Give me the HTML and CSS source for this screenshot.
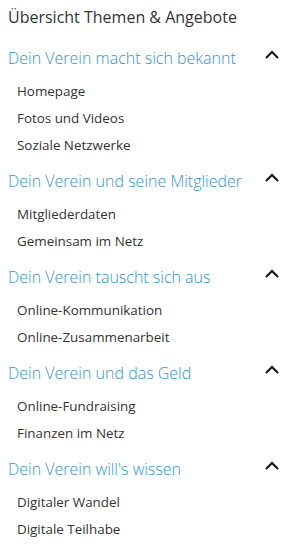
FILE: index.html
```html
<!DOCTYPE html>
<html lang="de">
  <head>
    <meta charset="UTF-8" />
    <meta name="viewport" content="width=device-width, initial-scale=1.0" />
    <title>Übersicht Themen &amp; Angebote</title>
    <link rel="stylesheet" href="styles.css">
  </head>
  <body>
    <div class="overview">
      <h1 class="overview-title">Übersicht Themen &amp; Angebote</h1>

      <!-- Themen -->
      <div class="topic">
        <div class="topic-head">
          <span class="topic-name">Dein Verein macht sich bekannt</span>
          <svg class="chevron" width="14" height="9" viewBox="0 0 14 9"><path d="M1 8 L7 2 L13 8" /></svg>
        </div>
        <ul class="topic-links">
          <li><a href="#">Homepage</a></li>
          <li><a href="#">Fotos und Videos</a></li>
          <li><a href="#">Soziale Netzwerke</a></li>
        </ul>
      </div>

      <div class="topic">
        <div class="topic-head">
          <span class="topic-name">Dein Verein und seine Mitglieder</span>
          <svg class="chevron" width="14" height="9" viewBox="0 0 14 9"><path d="M1 8 L7 2 L13 8" /></svg>
        </div>
        <ul class="topic-links">
          <li><a href="#">Mitgliederdaten</a></li>
          <li><a href="#">Gemeinsam im Netz</a></li>
        </ul>
      </div>

      <div class="topic">
        <div class="topic-head">
          <span class="topic-name">Dein Verein tauscht sich aus</span>
          <svg class="chevron" width="14" height="9" viewBox="0 0 14 9"><path d="M1 8 L7 2 L13 8" /></svg>
        </div>
        <ul class="topic-links">
          <li><a href="#">Online-Kommunikation</a></li>
          <li><a href="#">Online-Zusammenarbeit</a></li>
        </ul>
      </div>

      <div class="topic">
        <div class="topic-head">
          <span class="topic-name">Dein Verein und das Geld</span>
          <svg class="chevron" width="14" height="9" viewBox="0 0 14 9"><path d="M1 8 L7 2 L13 8" /></svg>
        </div>
        <ul class="topic-links">
          <li><a href="#">Online-Fundraising</a></li>
          <li><a href="#">Finanzen im Netz</a></li>
        </ul>
      </div>

      <div class="topic">
        <div class="topic-head">
          <span class="topic-name">Dein Verein will's wissen</span>
          <svg class="chevron" width="14" height="9" viewBox="0 0 14 9"><path d="M1 8 L7 2 L13 8" /></svg>
        </div>
        <ul class="topic-links">
          <li><a href="#">Digitaler Wandel</a></li>
          <li><a href="#">Digitale Teilhabe</a></li>
        </ul>
      </div>
    </div>
  </body>
</html>
```

FILE: styles.css
```css
/* General Styles */
body {
  font-family: "Open Sans", sans-serif;
  margin: 0;
  padding: 0;
  background: #fff;
  color: #333;
}

.overview {
  padding: 6px 17px 0 8px;
}

.overview-title {
  font-size: 16px;
  font-weight: normal;
  color: #333;
  margin: 0 0 18px 0;
  line-height: 22px;
}

.topic {
  margin-bottom: 11px;
}

.topic-head {
  display: flex;
  justify-content: space-between;
  align-items: center;
  height: 24px;
}

.topic-name {
  font-size: 16px;
  color: #3592cf;
  font-weight: 300;
}

.chevron {
  fill: none;
  stroke: #111;
  stroke-width: 2;
  margin-top: -7px;
}

.topic-links {
  list-style: none;
  margin: 0;
  padding: 7px 0 0 9px;
}

.topic-links li {
  height: 27px;
  line-height: 27px;
}

.topic-links a {
  color: #333;
  text-decoration: none;
  font-size: 13.4px;
}
```
